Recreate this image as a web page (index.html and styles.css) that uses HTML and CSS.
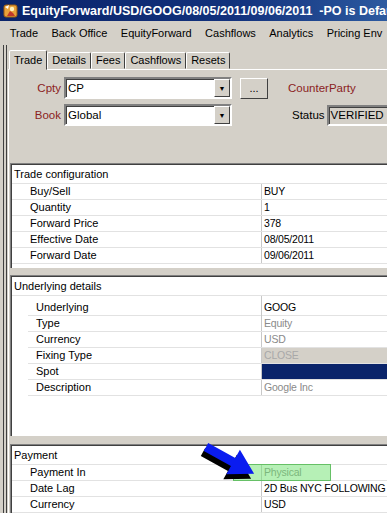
FILE: index.html
```html
<!DOCTYPE html>
<html lang="en">
<head>
  <meta charset="UTF-8" />
  <title>EquityForward</title>
  <link rel="stylesheet" href="styles.css">
</head>
<body>

  <div class="titlebar">
    <svg class="appicon" width="16" height="16" viewBox="0 0 16 16">
      <rect x="1" y="2" width="13" height="12" rx="2" fill="#e8a23a" stroke="#9a5a10"/>
      <circle cx="9" cy="6" r="2.2" fill="#fff3c0"/>
      <path d="M4 13 L7 8 L10 10 L12 13 Z" fill="#c0392b"/>
      <path d="M2 4 L6 2 L5 6 Z" fill="#fff"/>
    </svg>
    <span>EquityForward/USD/GOOG/08/05/2011/09/06/2011  -PO is Default</span>
  </div>

  <div class="menubar">
    <span>Trade</span>
    <span>Back Office</span>
    <span>EquityForward</span>
    <span>Cashflows</span>
    <span>Analytics</span>
    <span>Pricing Env</span>
  </div>

  <div class="frame">
    <div class="tabs">
      <div class="tab active">Trade</div>
      <div class="tab">Details</div>
      <div class="tab">Fees</div>
      <div class="tab">Cashflows</div>
      <div class="tab">Resets</div>
    </div>

    <div class="pane">
      <div class="form">
        <div class="form-row">
          <label class="req">Cpty</label>
          <div class="combo"><span>CP</span><b class="drop">&#9660;</b></div>
          <button class="dots">...</button>
          <span class="req cp">CounterParty</span>
        </div>
        <div class="form-row">
          <label class="req">Book</label>
          <div class="combo"><span>Global</span><b class="drop">&#9660;</b></div>
          <span class="status-label">Status</span>
          <div class="status">VERIFIED</div>
        </div>
      </div>

      <div class="panel trade-cfg">
        <div class="panel-head">Trade configuration</div>
        <div class="row"><span>Buy/Sell</span><span class="val">BUY</span></div>
        <div class="row"><span>Quantity</span><span class="val">1</span></div>
        <div class="row"><span>Forward Price</span><span class="val">378</span></div>
        <div class="row"><span>Effective Date</span><span class="val">08/05/2011</span></div>
        <div class="row"><span>Forward Date</span><span class="val">09/06/2011</span></div>
      </div>

      <div class="panel underlying">
        <div class="panel-head">Underlying details</div>
        <div class="row first"><span>Underlying</span><span class="val">GOOG</span></div>
        <div class="row"><span>Type</span><span class="val dim">Equity</span></div>
        <div class="row"><span>Currency</span><span class="val dim">USD</span></div>
        <div class="row"><span>Fixing Type</span><span class="val dim grey">CLOSE</span></div>
        <div class="row"><span>Spot</span><span class="val navy"></span></div>
        <div class="row"><span>Description</span><span class="val dim">Google Inc</span></div>
      </div>

      <div class="panel payment">
        <div class="panel-head">Payment</div>
        <div class="row"><span>Payment In</span><span class="val dim">Physical</span></div>
        <div class="row"><span>Date Lag</span><span class="val">2D Bus NYC FOLLOWING</span></div>
        <div class="row"><span>Currency</span><span class="val">USD</span></div>
      </div>
    </div>
  </div>

  <!-- callout drawn over the payment table -->
  <div class="highlight"></div>
  <svg class="arrow" width="70" height="50" viewBox="0 0 70 50">
    <g transform="translate(5 11) rotate(29)">
      <polygon points="0,-4.5 31,-4.5 31,-14 55,0 31,14 31,4.5 0,4.5" fill="#000"/>
    </g>
    <g transform="translate(8 6) rotate(29)">
      <polygon points="0,-4.5 31,-4.5 31,-14 55,0 31,14 31,4.5 0,4.5" fill="#0a1cf0"/>
    </g>
  </svg>

</body>
</html>
```

FILE: styles.css
```css
* { box-sizing: border-box; margin: 0; padding: 0; }
body {
  font-family: 'Liberation Sans', Arial, sans-serif;
  font-size: 11px;
  background: #d4d0c8;
  color: #000;
  width: 387px;
  height: 513px;
  overflow: hidden;
  position: relative;
}

.titlebar {
  height: 21px;
  display: flex;
  align-items: center;
  padding-left: 3px;
  background: linear-gradient(to right, #0a246a 0%, #12317c 60%, #2c5aa0 100%);
  color: #fff;
  font-size: 12.5px;
  font-weight: bold;
  white-space: pre;
  overflow: hidden;
}
.appicon { flex: none; margin-right: 3px; }

.menubar {
  height: 24px;
  display: flex;
  align-items: center;
  padding-left: 3px;
  white-space: nowrap;
  font-size: 11px;
}
.menubar span { padding: 0 6.7px; }

.frame {
  height: 468px;
  margin-left: 3px;
  border-left: 4px double #404040;
  padding-left: 1px;
}

.tabs {
  height: 24px;
  display: flex;
  align-items: flex-end;
  padding-left: 1px;
}
.tab {
  height: 17px;
  line-height: 15px;
  padding: 0 4px;
  border: 1px solid;
  border-color: #fff #404040 transparent #fff;
  border-radius: 2px 2px 0 0;
  white-space: nowrap;
}
.tab.active {
  height: 20px;
  line-height: 19px;
  margin-bottom: -1px;
  background: #d4d0c8;
  position: relative;
  z-index: 1;
}

.pane {
  border-top: 1px solid #fff;
  border-left: 1px solid #fff;
  padding: 7px 0 0 1px;
  height: 444px;
  overflow: hidden;
}

.form { margin-bottom: 37px; }
.form-row {
  height: 22px;
  display: flex;
  align-items: center;
  margin-bottom: 5px;
  white-space: nowrap;
}
.form-row > * { flex: none; }
.form-row label {
  width: 54px;
  text-align: right;
  padding-right: 3px;
  font-size: 11.5px;
}
.req { color: #8b2222; }

.combo {
  width: 168px;
  height: 22px;
  background: #fff;
  border: 2px solid;
  border-color: #808080 #fff #fff #808080;
  box-shadow: inset 1px 1px #404040;
  display: flex;
  align-items: center;
  padding-left: 2px;
  font-size: 11.5px;
}
.combo span { flex: 1; }
.drop {
  width: 16px;
  height: 18px;
  background: #d4d0c8;
  border: 1px solid;
  border-color: #fff #404040 #404040 #fff;
  font-size: 7px;
  font-weight: normal;
  color: #000;
  display: flex;
  align-items: center;
  justify-content: center;
}

.dots {
  width: 28px;
  height: 21px;
  margin-left: 8px;
  background: #d4d0c8;
  border: 1px solid;
  border-color: #fff #404040 #404040 #fff;
  font-family: inherit;
  font-size: 11px;
}
.cp { margin-left: 20px; font-size: 11.5px; }

.status-label { margin-left: 60px; font-size: 11.5px; }
.status {
  margin-left: 2px;
  width: 70px;
  height: 21px;
  line-height: 17px;
  padding-left: 2px;
  border: 2px solid;
  border-color: #808080 #d4d0c8 #fff #808080;
  box-shadow: inset 1px 1px #404040;
  font-size: 11.5px;
}

.panel {
  background: #fff;
  border-top: 1px solid #808080;
  border-left: 1px solid #808080;
  box-shadow: inset 1px 1px #404040;
  padding: 1px 0 0 1px;
  font-size: 11px;
}
.trade-cfg { height: 105px; margin-bottom: 7px; }
.underlying { height: 161px; margin-bottom: 8px; }
.payment { height: 80px; }

.panel-head {
  height: 19px;
  line-height: 19px;
  padding-left: 2px;
  border-bottom: 1px solid #e2e2e2;
}
.row {
  display: grid;
  grid-template-columns: 249px 1fr;
  height: 16px;
  line-height: 15px;
  border-bottom: 1px solid #e2e2e2;
}
.row span:first-child { padding-left: 18px; }
.val {
  border-left: 1px solid #c8c8c8;
  padding-left: 2px;
  white-space: nowrap;
  font-size: 10.5px;
  letter-spacing: -0.2px;
}
.dim { color: #8a8a8a; }
.grey { background: #d4d0c8; color: #a8a8a8; }
.navy { background: #0a246a; }

.underlying .row { margin-left: 16px; grid-template-columns: 233px 1fr; }
.underlying .row span:first-child { padding-left: 8px; }
.underlying .row.first { height: 20px; line-height: 23px; }

.highlight {
  position: absolute;
  left: 233px;
  top: 464px;
  width: 98px;
  height: 17px;
  background: rgba(110, 225, 110, 0.5);
  border: 1px solid #66c066;
}
.arrow {
  position: absolute;
  left: 198px;
  top: 441px;
}
```
